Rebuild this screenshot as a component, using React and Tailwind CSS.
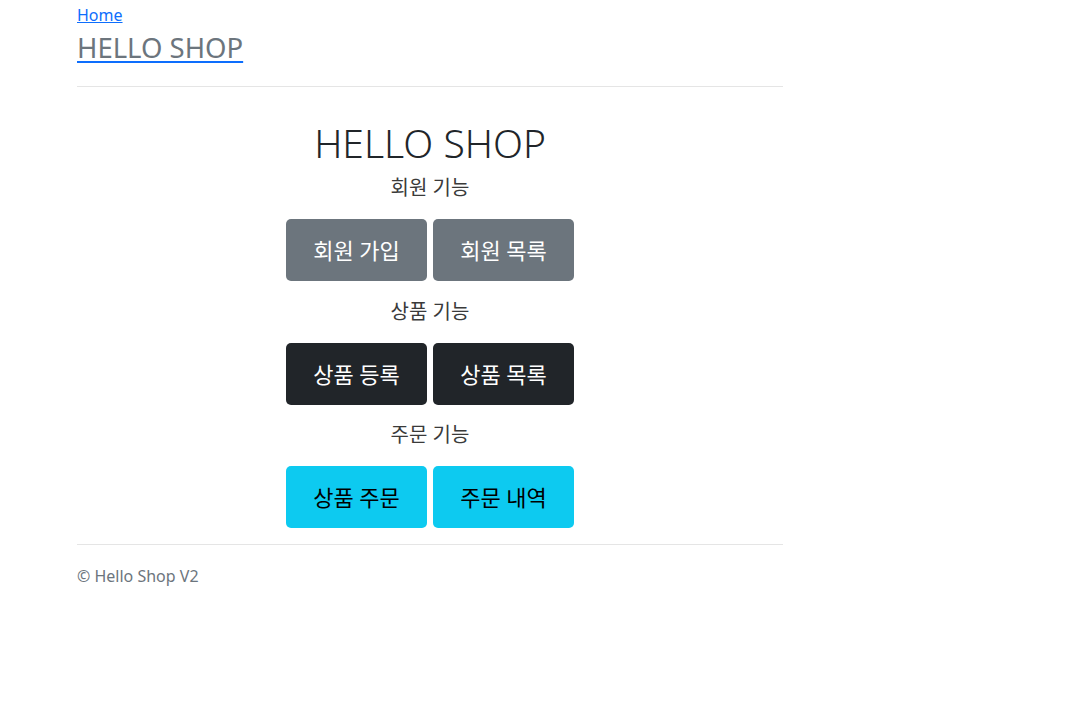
import React from "react";

const font = { fontFamily: '"Noto Sans", "Noto Sans CJK KR", sans-serif' };

function Btn({ children, cls }) {
  return (
    <a className={`flex h-[62px] w-[141px] items-center justify-center rounded-[5px] text-[22px] leading-none ${cls}`}>
      {children}
    </a>
  );
}

function Section({ label, a, b, cls, mt }) {
  return (
    <div className={`flex flex-col items-center ${mt}`}>
      <div className="flex h-[31px] items-center text-[20px] leading-none text-[#3a3a3a]">{label}</div>
      <div className="mt-[16px] flex gap-[6px]">
        <Btn cls={cls}>{a}</Btn>
        <Btn cls={cls}>{b}</Btn>
      </div>
    </div>
  );
}

export default function App() {
  return (
    <div className="min-h-[722px] w-full bg-white" style={font}>
      <div className="ml-[77px] w-[706px]">
        <div className="pt-[5px]">
          <a className="block h-[20px] text-[16px] leading-[20px] text-[#0d6efd] underline decoration-[#0d6efd]">Home</a>
        </div>
        <div className="mt-[6px] h-[34px]">
          <a className="text-[27.5px] leading-[34px] text-[#6c757d] underline decoration-[#0d6efd] decoration-2 underline-offset-[3px]">HELLO SHOP</a>
        </div>
        <div className="mt-[21px] h-px bg-[#e5e5e5]" />
        <div className="flex flex-col items-center pt-[31px]">
          <h1 className="h-[50px] text-[39px] font-light leading-[50px] text-[#212529]">HELLO SHOP</h1>
          <Section mt="mt-[4px]" label="회원 기능" a="회원 가입" b="회원 목록" cls="bg-[#6c757d] text-white" />
          <Section mt="mt-[15px]" label="상품 기능" a="상품 등록" b="상품 목록" cls="bg-[#212529] text-white" />
          <Section mt="mt-[14px]" label="주문 기능" a="상품 주문" b="주문 내역" cls="bg-[#0dcaf0] text-black" />
        </div>
        <div className="mt-[16px] h-px bg-[#e5e5e5]" />
        <div className="mt-[19px] text-[16px] leading-[24px] text-[#6c757d]">© Hello Shop V2</div>
      </div>
    </div>
  );
}
